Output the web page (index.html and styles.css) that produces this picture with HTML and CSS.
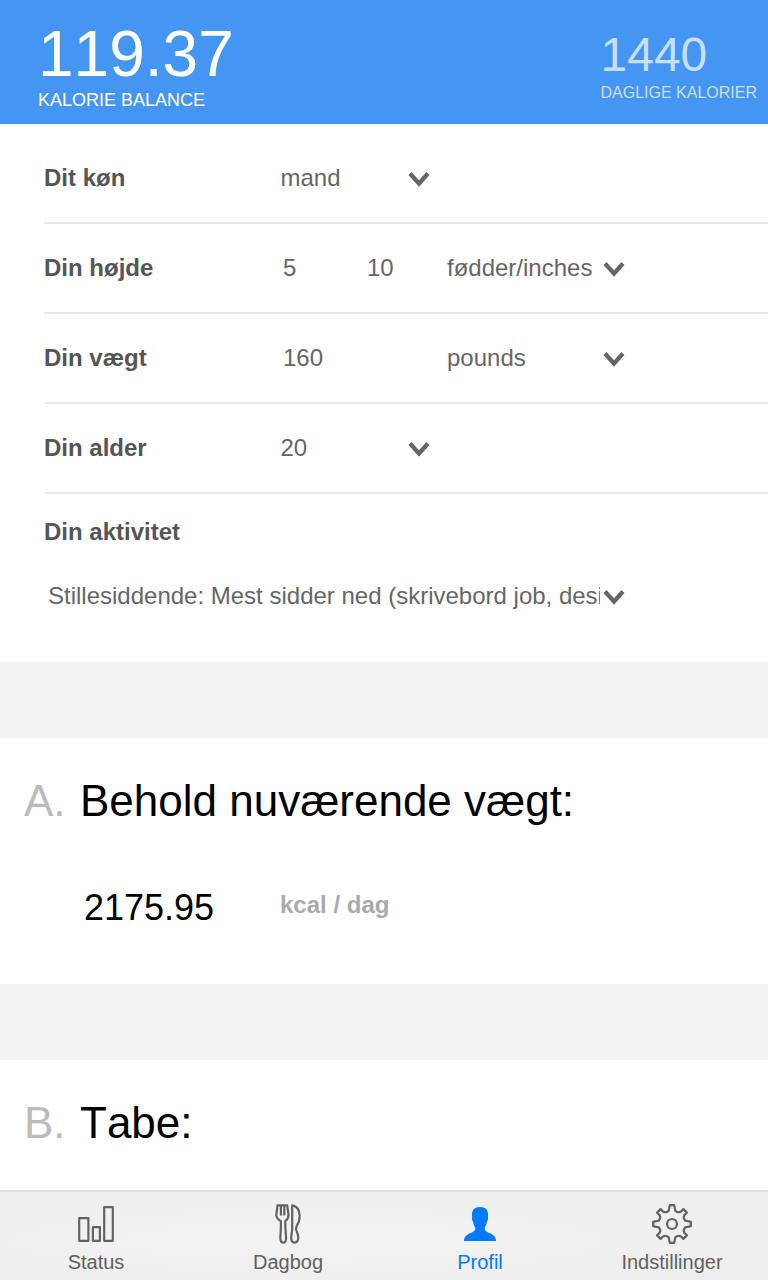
FILE: index.html
```html
<!DOCTYPE html>
<html lang="da">
<head>
<meta charset="utf-8">
<title>Profil</title>
<link rel="stylesheet" href="styles.css">
</head>
<body>
<div class="app">
  <header class="header">
    <div class="balance"><div class="balance-value">119.37</div><div class="balance-label">KALORIE BALANCE</div></div>
    <div class="daily"><div class="daily-value">1440</div><div class="daily-label">DAGLIGE KALORIER</div></div>
  </header>
  <main class="content">
    <section class="form">
      <div class="row"><span class="label">Dit køn</span><span class="select short">mand<svg class="chevron" viewBox="0 0 22 16"><path d="M2 2.5 11 12.5 20 2.5"/></svg></span></div>
      <div class="row"><span class="label">Din højde</span><span class="input feet">5</span><span class="input inches">10</span><span class="select unit">fødder/inches<svg class="chevron" viewBox="0 0 22 16"><path d="M2 2.5 11 12.5 20 2.5"/></svg></span></div>
      <div class="row"><span class="label">Din vægt</span><span class="input weight">160</span><span class="select unit">pounds<svg class="chevron" viewBox="0 0 22 16"><path d="M2 2.5 11 12.5 20 2.5"/></svg></span></div>
      <div class="row"><span class="label">Din alder</span><span class="select short">20<svg class="chevron" viewBox="0 0 22 16"><path d="M2 2.5 11 12.5 20 2.5"/></svg></span></div>
      <div class="activity">
        <div class="label">Din aktivitet</div>
        <div class="select long"><span class="clip">Stillesiddende: Mest sidder ned (skrivebord job, desi</span><svg class="chevron" viewBox="0 0 22 16"><path d="M2 2.5 11 12.5 20 2.5"/></svg></div>
      </div>
    </section>
    <section class="card keep">
      <h2 class="title"><span class="letter">A.</span>Behold nuværende vægt:</h2>
      <div class="result"><span class="amount">2175.95</span><span class="per-day">kcal / dag</span></div>
    </section>
    <section class="card"><h2 class="title"><span class="letter">B.</span>Tabe:</h2></section>
  </main>
  <nav class="tabs">
    <a class="tab"><svg class="icon" viewBox="0 0 40 40"><path d="M3.2 14.2h9.2v22.6H3.2zM16.9 23.2h7v13.6h-7zM28.2 3.2h8.6v33.6h-8.6z"/></svg>Status</a>
    <a class="tab"><svg class="icon" viewBox="0 0 40 40"><path d="M9.5 1.3H19.2L20.5 11Q20.4 15 17.3 17.2V22L18.1 34.5Q17.8 38.7 15.3 38.7 12.8 38.7 12.3 34.5L12.9 22V17.2Q8.3 14.5 8.3 11ZM12.9 1.5V11.5M16.3 1.5V11.5M24.2 1.3V24.5Q24.2 27 23.6 29L23.2 34.5Q23.6 38.5 26.3 38.6 29.5 38.7 30.3 34.5 30.6 31.5 28.8 27.8 27.3 25.3 28.6 22 31.7 17.5 31.7 12 31.5 2.4 24.2 1.3Z"/></svg>Dagbog</a>
    <a class="tab active"><svg class="icon" viewBox="0 0 40 40"><path d="M20 3C25.5 3 28.1 6 28 10.5V13C28.5 15 27.5 17 26.9 18 26.4 21 25.4 22.5 24.8 23.4V25.5C26 28 28.6 28.6 31.5 30 35 31.8 36 34 36 37H4C4 34 5 31.8 8.5 30 11.4 28.6 14 28 15.2 25.5V23.4C14.6 22.5 13.6 21 13.1 18 12.5 17 11.5 15 12 13V10.5C11.9 6 14.5 3 20 3Z"/></svg>Profil</a>
    <a class="tab"><svg class="icon" viewBox="0 0 40 40"><path d="M17.8 1.2H22.2L23.3 6.7Q25.6 9 28.7 7.8L31.4 5.1 34.9 8.6 32.2 11.3Q31 14.4 33.3 16.7L38.8 17.8V22.2L33.3 23.3Q31 25.6 32.2 28.7L34.9 31.4 31.4 34.9 28.7 32.2Q25.6 31 23.3 33.3L22.2 38.8H17.8L16.7 33.3Q14.4 31 11.3 32.2L8.6 34.9 5.1 31.4 7.8 28.7Q9 25.6 6.7 23.3L1.2 22.2V17.8L6.7 16.7Q9 14.4 7.8 11.3L5.1 8.6 8.6 5.1 11.3 7.8Q14.4 9 16.7 6.7Z"/><circle cx="20" cy="20" r="5"/></svg>Indstillinger</a>
  </nav>
</div>
</body>
</html>
```
FILE: styles.css
```css
* { box-sizing: border-box; }
body { margin: 0; font-family: "Liberation Sans", Arial, sans-serif; font-kerning: none; }
.app { display: flex; flex-direction: column; width: 768px; height: 1280px; overflow: hidden; background: #f2f3f5; }
.header { display: flex; flex: none; justify-content: space-between; height: 124px; padding: 22px 11px 0 38px; background: #4595f2; color: #fff; }
.balance-value { font-size: 64px; line-height: 64px; }
.balance-label { margin-top: 4px; font-size: 18px; line-height: 20px; }
.daily { padding-top: 9px; color: #c7dffb; }
.daily-value { font-size: 48px; line-height: 48px; }
.daily-label { margin-top: 5px; font-size: 16px; line-height: 18px; }
.content { display: flex; flex: 1; flex-direction: column; gap: 76px; min-height: 0; overflow: hidden; }
.form { flex: none; height: 538px; padding: 10px 0 0 44px; background: #fff; color: #666; font-size: 24px; }
.row { display: flex; align-items: center; height: 90px; border-bottom: 2px solid #ebebeb; }
.label { width: 236px; color: #555; font-weight: bold; }
.select { display: flex; align-items: center; justify-content: space-between; white-space: nowrap; }
.short { width: 150px; padding-left: 0.5px; }
.unit { width: 177.5px; }
.feet { width: 84px; padding-left: 3px; }
.inches { width: 83px; padding-left: 3px; }
.weight { width: 167px; padding-left: 3px; }
.chevron { flex: none; width: 22px; height: 16px; margin-top: 1px; fill: none; stroke: #666; stroke-width: 4.2; }
.activity { padding-top: 24px; line-height: 28px; }
.long { width: 581px; margin-top: 36px; padding-left: 4px; }
.clip { width: 552px; overflow: hidden; }
.card { flex: none; padding: 38px 0 0 24px; background: #fff; height: 246px; }
.title { display: flex; margin: 0; font-size: 44px; font-weight: normal; line-height: 50px; color: #000; }
.letter { width: 56px; color: #bbb; }
.result { display: flex; margin: 62px 0 0 60px; }
.amount { width: 196px; font-size: 36px; line-height: 40px; }
.per-day { padding-top: 3px; color: #aaa; font-size: 24px; font-weight: bold; line-height: 28px; }
.tabs { display: flex; flex: none; height: 90px; border-top: 2px solid #dcdcdc; background: radial-gradient(ellipse at 40% 55%, #f3f3f3, #eee 75%); }
.tab { display: flex; flex: 1; flex-direction: column; align-items: center; gap: 7px; padding-top: 12px; color: #606060; font-size: 20px; line-height: 22px; }
.icon { width: 40px; height: 40px; fill: none; stroke: #636363; stroke-width: 2.2; stroke-linejoin: round; }
.active { color: #007aff; }
.active .icon { fill: #007aff; stroke: none; }
```
